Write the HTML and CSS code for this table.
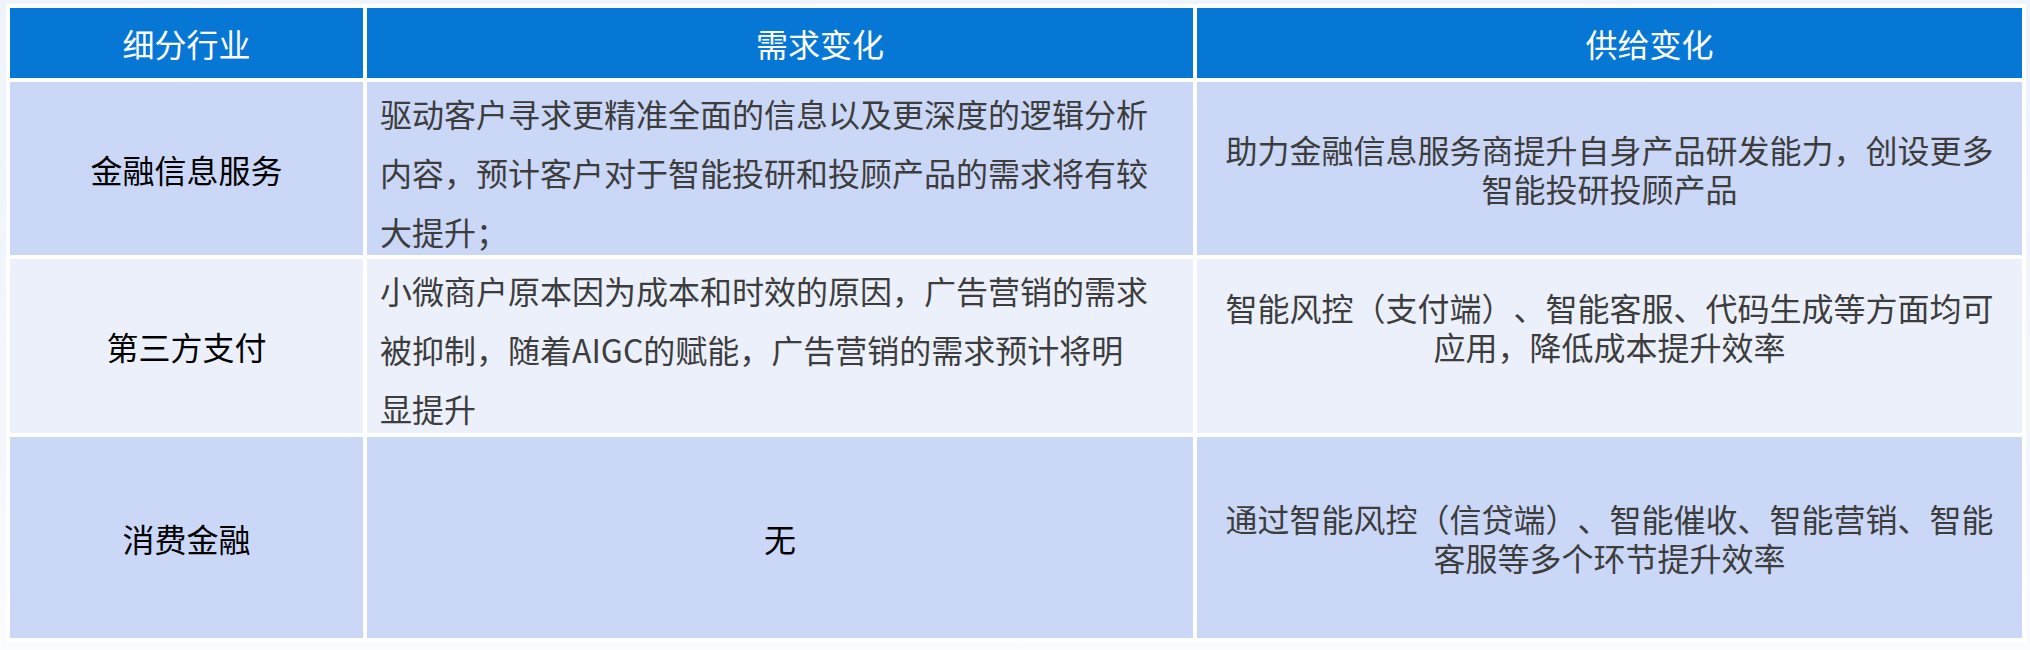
FILE: index.html
```html
<!DOCTYPE html>
<html lang="zh-CN">
<head>
<meta charset="utf-8">
<title>细分行业需求与供给变化</title>
<link rel="stylesheet" href="styles.css">
</head>
<body>
<div class="table">
  <div class="cell head">细分行业</div>
  <div class="cell head head-shift">需求变化</div>
  <div class="cell head head-shift">供给变化</div>

  <div class="cell name row-a">金融信息服务</div>
  <div class="cell demand row-a"><p class="text">驱动客户寻求更精准全面的信息以及更深度的逻辑分析<br>内容，预计客户对于智能投研和投顾产品的需求将有较<br>大提升；</p></div>
  <div class="cell supply row-a"><p class="text">助力金融信息服务商提升自身产品研发能力，创设更多<br>智能投研投顾产品</p></div>

  <div class="cell name row-b">第三方支付</div>
  <div class="cell demand row-b"><p class="text">小微商户原本因为成本和时效的原因，广告营销的需求<br>被抑制，随着AIGC的赋能，广告营销的需求预计将明<br>显提升</p></div>
  <div class="cell supply row-b extra-line"><p class="text">智能风控（支付端）、智能客服、代码生成等方面均可<br>应用，降低成本提升效率</p></div>

  <div class="cell name row-a">消费金融</div>
  <div class="cell none row-a">无</div>
  <div class="cell supply row-a"><p class="text">通过智能风控（信贷端）、智能催收、智能营销、智能<br>客服等多个环节提升效率</p></div>
</div>
</body>
</html>
```

FILE: styles.css
```css
html, body {
  margin: 0;
  padding: 0;
}

body {
  width: 2030px;
  height: 650px;
  background: linear-gradient(180deg, #eff4fb 0%, #f3f7fc 70%, #fafcfe 100%);
  font-family: "Noto Sans CJK SC", "Noto Sans", sans-serif;
  font-size: 32px;
  text-spacing-trim: space-all;
  overflow: hidden;
}

.table {
  margin: 4px 0 0 6px;
  width: 2012px;
  padding: 4px;
  background: #ffffff;
  display: grid;
  grid-template-columns: 353px 826px 825px;
  grid-template-rows: 70px 173px 174px 201px;
  gap: 4px;
}

.cell {
  box-sizing: border-box;
  min-width: 0;
}

.text {
  margin: 0;
}

.head {
  background: #0777d6;
  color: #ffffff;
  display: flex;
  align-items: center;
  justify-content: center;
  line-height: 40px;
}

.head-shift {
  padding-left: 80px;
}

.row-a {
  background: #cbd7f7;
}

.row-b {
  background: #ebf0fb;
}

.name,
.none {
  color: #000000;
  display: flex;
  align-items: center;
  justify-content: center;
  line-height: 40px;
}

.demand {
  color: #3d3d3d;
  padding: 2px 13px 0 13px;
  line-height: 57px;
  overflow: hidden;
}

.demand .text {
  line-height: 59px;
}

.supply {
  color: #3d3d3d;
  display: flex;
  align-items: center;
  justify-content: center;
  text-align: center;
  line-height: 39px;
  padding: 0 12px;
}

.extra-line {
  padding-bottom: 39px;
}
```
